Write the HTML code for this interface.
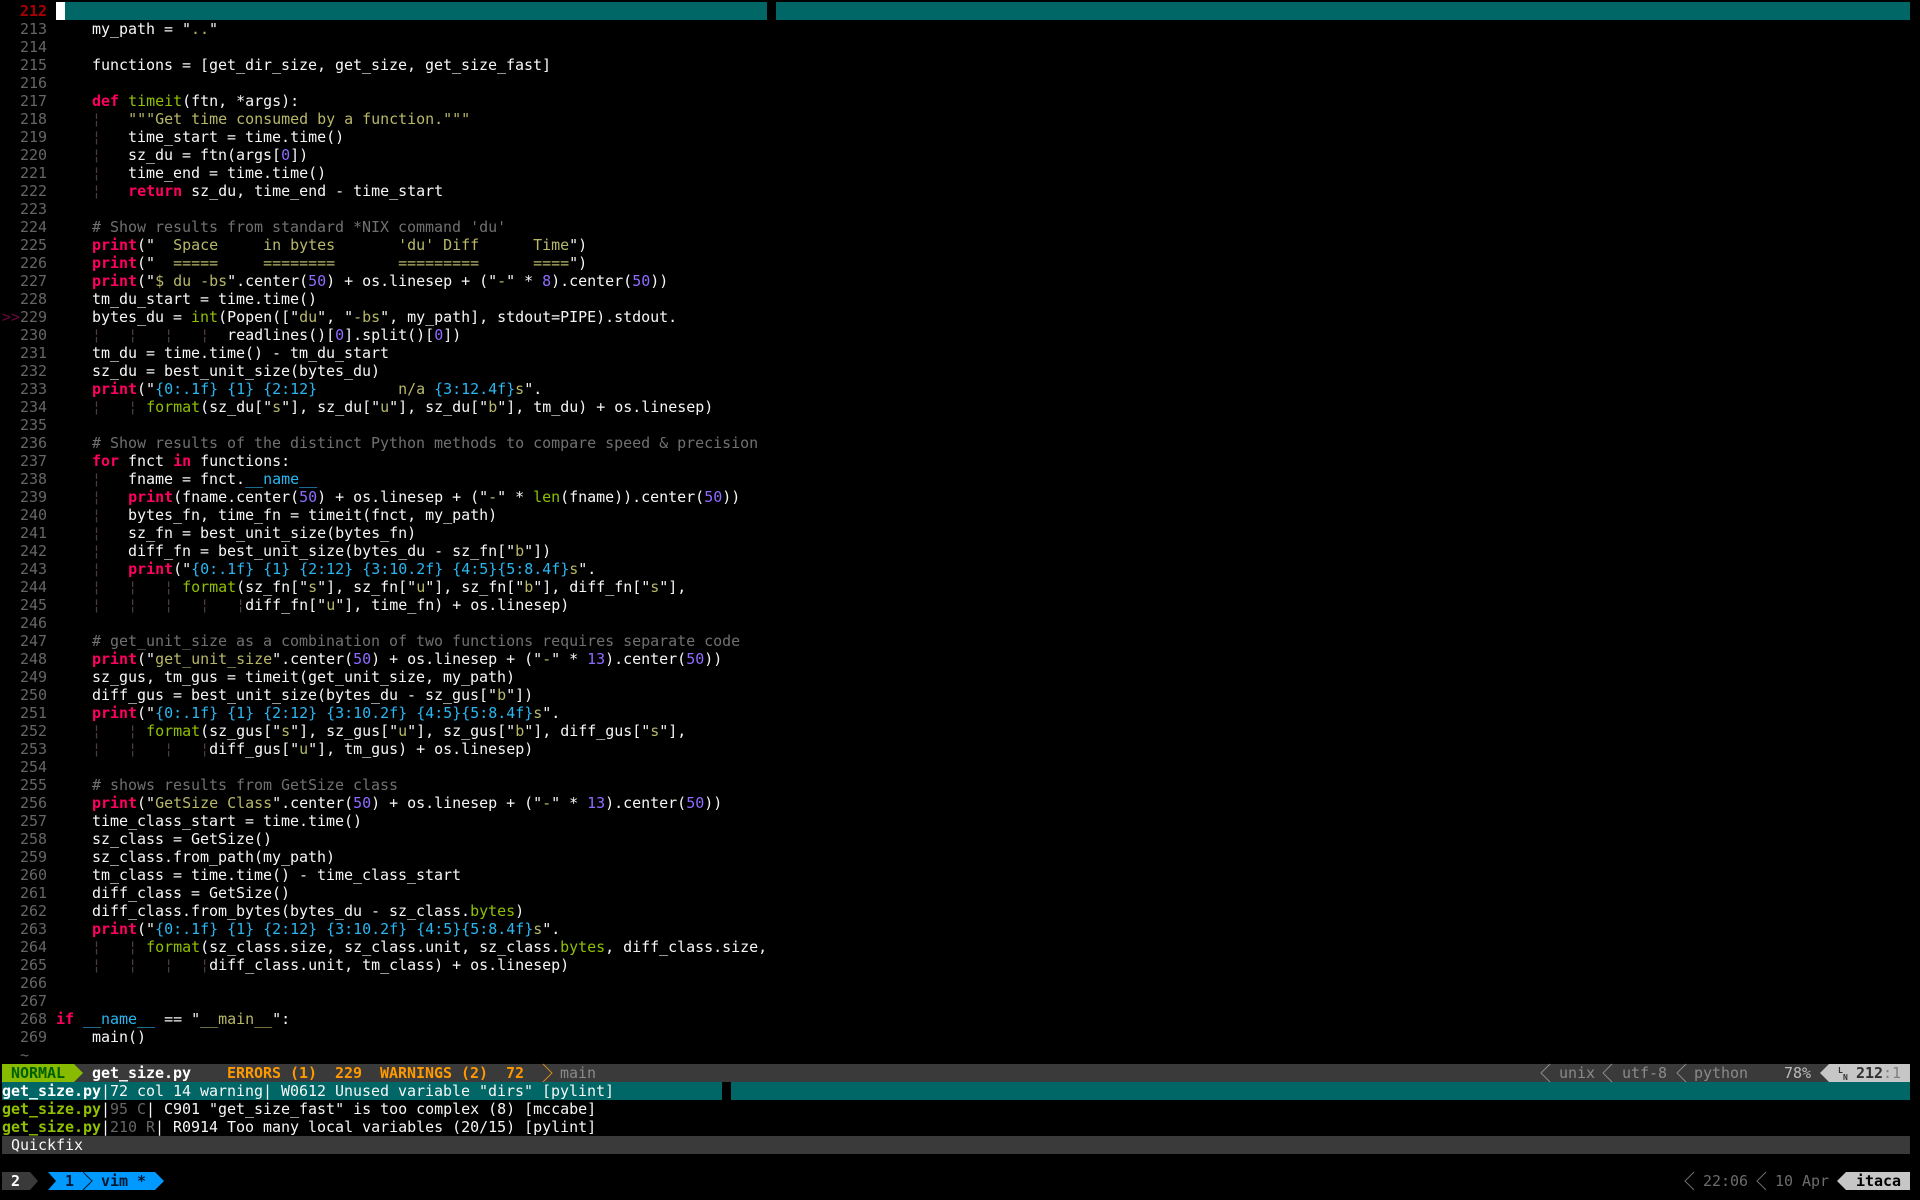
<!DOCTYPE html>
<html><head><meta charset="utf-8"><title>vim</title>
<style>
html,body{margin:0;padding:0;background:#000;width:1920px;height:1200px;overflow:hidden}
body{position:relative;font-family:"DejaVu Sans Mono","Liberation Mono",monospace;font-size:15px;color:#f6f6f6}
pre,.t{margin:0;font:inherit;line-height:18px;white-space:pre;letter-spacing:-.03px}
pre{position:absolute;left:2px;top:2px;z-index:2}
.t{position:absolute;z-index:2;height:18px}
.r{position:absolute;z-index:1;height:18px}
b{color:#ff0060;font-weight:bold}
i{color:#b8b868;font-style:normal}
u{color:#90c000;text-decoration:none}
s{color:#8f6cff;text-decoration:none}
em{color:#2ab6f0;font-style:normal}
cite{color:#707070;font-style:normal}
small{color:#4e3c3c;font-size:inherit}
var{color:#666;font-style:normal}
svg{position:absolute;z-index:3;left:0;top:0}
</style></head><body>
<div class="r" style="left:56px;top:2px;width:9px;background:#fff"></div>
<div class="r" style="left:65px;top:2px;width:702px;background:#006666"></div>
<div class="r" style="left:776px;top:2px;width:1134px;background:#006666"></div>
<div class="r" style="left:2px;top:1064px;width:1908px;background:#3a3a3a"></div>
<div class="r" style="left:2px;top:1082px;width:720px;background:#006666"></div>
<div class="r" style="left:731px;top:1082px;width:1179px;background:#006666"></div>
<div class="r" style="left:2px;top:1136px;width:1908px;background:#3a3a3a"></div>
<div class="r" style="left:2px;top:1064px;width:72px;background:#88bb00"></div>
<div class="r" style="left:1829px;top:1064px;width:81px;background:#c6c6c6"></div>
<div class="r" style="left:2px;top:1172px;width:28px;background:#3a3a3a"></div>
<div class="r" style="left:1846px;top:1172px;width:64px;background:#c6c6c6"></div>
<svg width="1920" height="1200" viewBox="0 0 1920 1200" fill="none">
<polygon points="74,1064 83,1073 74,1082" fill="#88bb00"/>
<polygon points="30,1172 38,1181 30,1190" fill="#3a3a3a"/>
<polygon points="48,1172 155,1172 164,1181 155,1190 48,1190 56,1181" fill="#0099ff"/>
<polyline points="83,1172 92,1181 83,1190" stroke="#00182a" stroke-width="1"/>
<polygon points="1829,1064 1820,1073 1829,1082" fill="#c6c6c6"/>
<polygon points="1846,1172 1837,1181 1846,1190" fill="#c6c6c6"/>
<polyline points="543,1064 552,1073 543,1082" stroke="#d08a20" stroke-width="1"/>
<g stroke="#8a8a8a" stroke-width="1">
<polyline points="1550,1064 1541,1073 1550,1082"/>
<polyline points="1612,1064 1603,1073 1612,1082"/>
<polyline points="1686,1064 1677,1073 1686,1082"/>
</g>
<g stroke="#6c6c6c" stroke-width="1">
<polyline points="1694,1172 1685,1181 1694,1190"/>
<polyline points="1766,1172 1757,1181 1766,1190"/>
</g>
</svg>
<pre><var>  </var><span style="color:#a80000;font-weight:bold">212</span>
<var>  213 </var>    my_path = "<i>..</i>"
<var>  214 </var>
<var>  215 </var>    functions = [get_dir_size, get_size, get_size_fast]
<var>  216 </var>
<var>  217 </var>    <b>def</b> <u>timeit</u>(ftn, *args):
<var>  218 </var>    <small>¦</small>   <i>"""Get time consumed by a function."""</i>
<var>  219 </var>    <small>¦</small>   time_start = time.time()
<var>  220 </var>    <small>¦</small>   sz_du = ftn(args[<s>0</s>])
<var>  221 </var>    <small>¦</small>   time_end = time.time()
<var>  222 </var>    <small>¦</small>   <b>return</b> sz_du, time_end - time_start
<var>  223 </var>
<var>  224 </var>    <cite># Show results from standard *NIX command 'du'</cite>
<var>  225 </var>    <b>print</b>("<i>  Space     in bytes       'du' Diff      Time</i>")
<var>  226 </var>    <b>print</b>("<i>  =====     ========       =========      ====</i>")
<var>  227 </var>    <b>print</b>("<i>$ du -bs</i>".center(<s>50</s>) + os.linesep + ("<i>-</i>" * <s>8</s>).center(<s>50</s>))
<var>  228 </var>    tm_du_start = time.time()
<span style="color:#6a0a40">&gt;&gt;</span><var>229 </var>    bytes_du = <u>int</u>(Popen(["<i>du</i>", "<i>-bs</i>", my_path], stdout=PIPE).stdout.
<var>  230 </var>    <small>¦</small>   <small>¦</small>   <small>¦</small>   <small>¦</small>  readlines()[<s>0</s>].split()[<s>0</s>])
<var>  231 </var>    tm_du = time.time() - tm_du_start
<var>  232 </var>    sz_du = best_unit_size(bytes_du)
<var>  233 </var>    <b>print</b>("<em>{0:.1f}</em> <em>{1}</em> <em>{2:12}</em><i>         n/a </i><em>{3:12.4f}</em><i>s</i>".
<var>  234 </var>    <small>¦</small>   <small>¦</small> <u>format</u>(sz_du["<i>s</i>"], sz_du["<i>u</i>"], sz_du["<i>b</i>"], tm_du) + os.linesep)
<var>  235 </var>
<var>  236 </var>    <cite># Show results of the distinct Python methods to compare speed &amp; precision</cite>
<var>  237 </var>    <b>for</b> fnct <b>in</b> functions:
<var>  238 </var>    <small>¦</small>   fname = fnct.<em>__name__</em>
<var>  239 </var>    <small>¦</small>   <b>print</b>(fname.center(<s>50</s>) + os.linesep + ("<i>-</i>" * <u>len</u>(fname)).center(<s>50</s>))
<var>  240 </var>    <small>¦</small>   bytes_fn, time_fn = timeit(fnct, my_path)
<var>  241 </var>    <small>¦</small>   sz_fn = best_unit_size(bytes_fn)
<var>  242 </var>    <small>¦</small>   diff_fn = best_unit_size(bytes_du - sz_fn["<i>b</i>"])
<var>  243 </var>    <small>¦</small>   <b>print</b>("<em>{0:.1f}</em> <em>{1}</em> <em>{2:12}</em> <em>{3:10.2f}</em> <em>{4:5}{5:8.4f}</em><i>s</i>".
<var>  244 </var>    <small>¦</small>   <small>¦</small>   <small>¦</small> <u>format</u>(sz_fn["<i>s</i>"], sz_fn["<i>u</i>"], sz_fn["<i>b</i>"], diff_fn["<i>s</i>"],
<var>  245 </var>    <small>¦</small>   <small>¦</small>   <small>¦</small>   <small>¦</small>   <small>¦</small>diff_fn["<i>u</i>"], time_fn) + os.linesep)
<var>  246 </var>
<var>  247 </var>    <cite># get_unit_size as a combination of two functions requires separate code</cite>
<var>  248 </var>    <b>print</b>("<i>get_unit_size</i>".center(<s>50</s>) + os.linesep + ("<i>-</i>" * <s>13</s>).center(<s>50</s>))
<var>  249 </var>    sz_gus, tm_gus = timeit(get_unit_size, my_path)
<var>  250 </var>    diff_gus = best_unit_size(bytes_du - sz_gus["<i>b</i>"])
<var>  251 </var>    <b>print</b>("<em>{0:.1f}</em> <em>{1}</em> <em>{2:12}</em> <em>{3:10.2f}</em> <em>{4:5}{5:8.4f}</em><i>s</i>".
<var>  252 </var>    <small>¦</small>   <small>¦</small> <u>format</u>(sz_gus["<i>s</i>"], sz_gus["<i>u</i>"], sz_gus["<i>b</i>"], diff_gus["<i>s</i>"],
<var>  253 </var>    <small>¦</small>   <small>¦</small>   <small>¦</small>   <small>¦</small>diff_gus["<i>u</i>"], tm_gus) + os.linesep)
<var>  254 </var>
<var>  255 </var>    <cite># shows results from GetSize class</cite>
<var>  256 </var>    <b>print</b>("<i>GetSize Class</i>".center(<s>50</s>) + os.linesep + ("<i>-</i>" * <s>13</s>).center(<s>50</s>))
<var>  257 </var>    time_class_start = time.time()
<var>  258 </var>    sz_class = GetSize()
<var>  259 </var>    sz_class.from_path(my_path)
<var>  260 </var>    tm_class = time.time() - time_class_start
<var>  261 </var>    diff_class = GetSize()
<var>  262 </var>    diff_class.from_bytes(bytes_du - sz_class.<u>bytes</u>)
<var>  263 </var>    <b>print</b>("<em>{0:.1f}</em> <em>{1}</em> <em>{2:12}</em> <em>{3:10.2f}</em> <em>{4:5}{5:8.4f}</em><i>s</i>".
<var>  264 </var>    <small>¦</small>   <small>¦</small> <u>format</u>(sz_class.size, sz_class.unit, sz_class.<u>bytes</u>, diff_class.size,
<var>  265 </var>    <small>¦</small>   <small>¦</small>   <small>¦</small>   <small>¦</small>diff_class.unit, tm_class) + os.linesep)
<var>  266 </var>
<var>  267 </var>
<var>  268 </var><b>if</b> <em>__name__</em> == "<i>__main__</i>":
<var>  269 </var>    main()
<var>  ~</var></pre>
<span class="t" style="left:11px;top:1064px;color:#005f00;font-weight:bold">NORMAL</span>
<span class="t" style="left:92px;top:1064px;color:#fff;font-weight:bold">get_size.py</span>
<span class="t" style="left:227px;top:1064px;color:#ff9900;font-weight:bold">ERRORS (1)  229  WARNINGS (2)  72</span>
<span class="t" style="left:560px;top:1064px;color:#8a8a8a">main</span>
<span class="t" style="left:1559px;top:1064px;color:#8a8a8a">unix</span>
<span class="t" style="left:1622px;top:1064px;color:#8a8a8a">utf-8</span>
<span class="t" style="left:1694px;top:1064px;color:#8a8a8a">python</span>
<span class="t" style="left:1784px;top:1064px;color:#bcbcbc">78%</span>
<span class="t" style="left:1838px;top:1062px;color:#303030;font-weight:bold;font-size:8px">L</span>
<span class="t" style="left:1843px;top:1069px;color:#303030;font-weight:bold;font-size:8px">N</span>
<span class="t" style="left:1856px;top:1064px;color:#303030;font-weight:bold">212<span style="color:#808080;font-weight:normal">:1</span></span>
<span class="t" style="left:2px;top:1082px"><span style="color:#fff;font-weight:bold">get_size.py</span>|72 col 14 warning| W0612 Unused variable "dirs" [pylint]</span>
<span class="t" style="left:2px;top:1100px"><span style="color:#90c000;font-weight:bold">get_size.py</span>|<var>95 C</var>| C901 "get_size_fast" is too complex (8) [mccabe]</span>
<span class="t" style="left:2px;top:1118px"><span style="color:#90c000;font-weight:bold">get_size.py</span>|<var>210 R</var>| R0914 Too many local variables (20/15) [pylint]</span>
<span class="t" style="left:11px;top:1136px">Quickfix</span>
<span class="t" style="left:11px;top:1172px;color:#fff;font-weight:bold">2</span>
<span class="t" style="left:65px;top:1172px;color:#001830;font-weight:bold;z-index:4">1</span>
<span class="t" style="left:101px;top:1172px;color:#001830;font-weight:bold;z-index:4">vim *</span>
<span class="t" style="left:1703px;top:1172px;color:#6c6c6c">22:06</span>
<span class="t" style="left:1775px;top:1172px;color:#6c6c6c">10 Apr</span>
<span class="t" style="left:1856px;top:1172px;color:#000;font-weight:bold">itaca</span>
</body></html>
